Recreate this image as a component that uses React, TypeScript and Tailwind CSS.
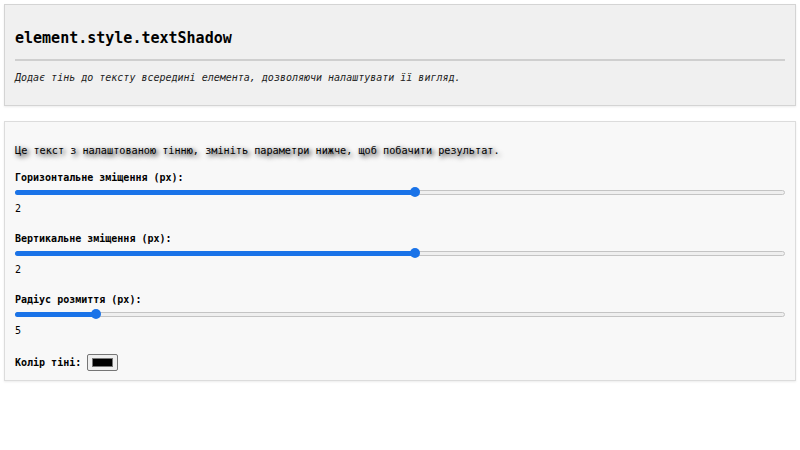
import { useState } from "react";

const mono = "font-['DejaVu_Sans_Mono',monospace]";

function Slider({
  value,
  min,
  max,
}: {
  value: number;
  min: number;
  max: number;
}) {
  const pct = (value - min) / (max - min);
  return (
    <div className="relative h-[10px] w-full">
      <div className="absolute left-0 right-0 top-[3px] h-[5px] rounded-full border border-[#c4c4c4] bg-[#efefef]" />
      <div
        className="absolute left-0 top-[3px] h-[5px] rounded-full bg-[#1a73e8]"
        style={{ width: `calc(5px + (100% - 10px) * ${pct})` }}
      />
      <div
        className="absolute top-0 h-[10px] w-[10px] rounded-full bg-[#1a73e8]"
        style={{ left: `calc((100% - 10px) * ${pct})` }}
      />
    </div>
  );
}

export default function App() {
  const [x] = useState(2);
  const [y] = useState(2);
  const [blur] = useState(5);

  const controls = [
    { label: "Горизонтальне зміщення (px):", value: x, min: -50, max: 50 },
    { label: "Вертикальне зміщення (px):", value: y, min: -50, max: 50 },
    { label: "Радіус розмиття (px):", value: blur, min: 0, max: 50 },
  ];

  return (
    <div className={`min-h-[450px] bg-white p-1 text-black ${mono}`}>
      <div className="border border-[#d4d4d4] bg-[#f0f0f0] px-[10px] pb-[21px] pt-[24px] shadow-[0_1px_2px_rgba(0,0,0,0.08)]">
        <h2 className="text-[15px] font-bold leading-[18px]">
          element.style.textShadow
        </h2>
        <hr className="mt-[12px] border-t-2 border-[#cfcfcf]" />
        <p className="mt-[11px] text-[10px] italic leading-[12px] text-[#222]">
          Додає тінь до тексту всередині елемента, дозволяючи налаштувати її
          вигляд.
        </p>
      </div>

      <div className="mt-[15px] border border-[#dcdcdc] bg-[#f8f8f8] px-[10px] pb-[9px] pt-[23px] shadow-[0_1px_2px_rgba(0,0,0,0.08)]">
        <p
          className="text-[10.2px] leading-[12px]"
          style={{ textShadow: `${x}px ${y}px ${blur}px #000000` }}
        >
          Це текст з налаштованою тінню, змініть параметри нижче, щоб
          побачити результат.
        </p>

        {controls.map((c, i) => (
          <div key={c.label} className={i === 0 ? "mt-[15px]" : "mt-[18px]"}>
            <label className="block text-[10px] font-bold leading-[12px]">
              {c.label}
            </label>
            <div className="mt-[3px]">
              <Slider value={c.value} min={c.min} max={c.max} />
            </div>
            <div className="mt-[6px] text-[10px] leading-[12px]">{c.value}</div>
          </div>
        ))}

        <div className="mt-[17px] flex items-center gap-[6px]">
          <span className="text-[10px] font-bold leading-[12px]">Колір тіні:</span>
          <span className="flex h-[17px] w-[31px] items-center justify-center rounded-[2px] border border-[#767676] bg-[#efefef] px-[4px] py-[3px]">
            <span className="block h-full w-full border border-[#777] bg-black" />
          </span>
        </div>
      </div>
    </div>
  );
}
